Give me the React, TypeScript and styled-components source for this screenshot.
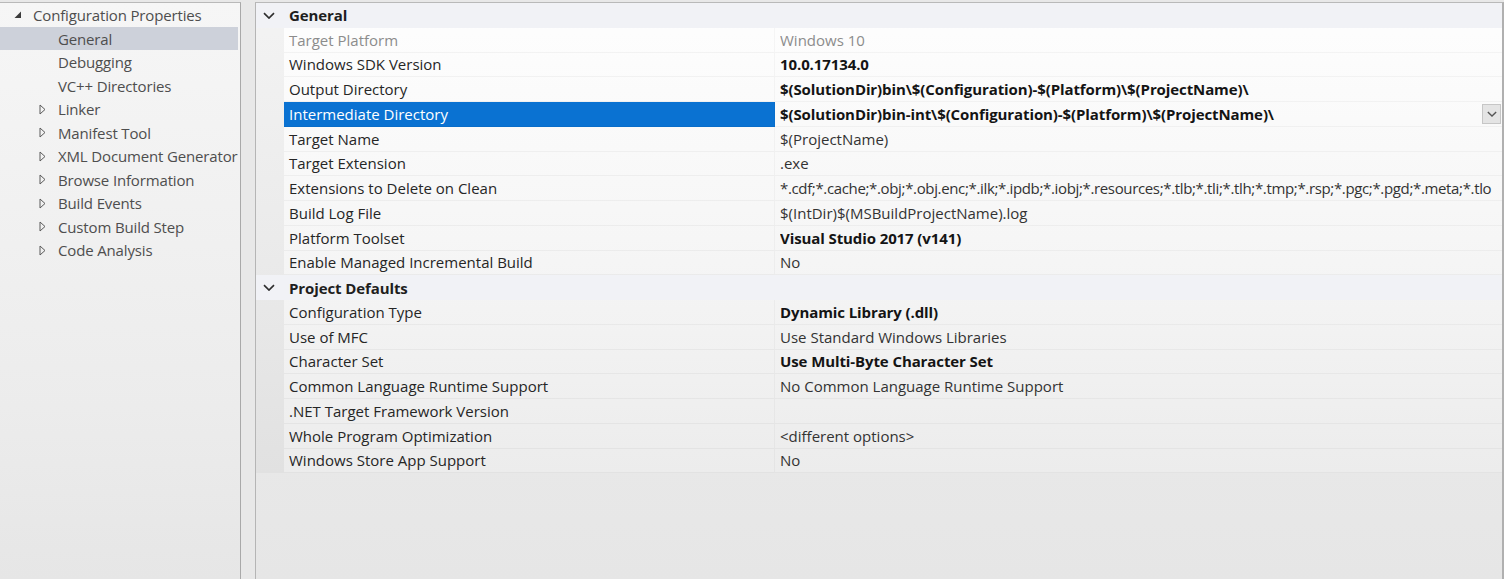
import React from "react";
import styled, { createGlobalStyle } from "styled-components";

const Global = createGlobalStyle`
  html, body { margin: 0; padding: 0; }
  body {
    width: 1504px;
    height: 579px;
    overflow: hidden;
    background: #e9e9e9;
    font-family: "Open Sans", "Noto Sans", sans-serif;
  }
`;

const Page = styled.div`
  display: flex;
  width: 1504px;
  height: 579px;
  padding-top: 2px;
  box-sizing: border-box;
  background: #e8e8e8;
`;

const TreePanel = styled.div`
  width: 241px;
  flex: none;
  box-sizing: border-box;
  border-top: 1px solid #b9b9b9;
  border-right: 1px solid #a9a9a9;
  background: linear-gradient(#f6f6f6, #ececec 70%, #e6e6e6);
  padding-top: 0.25px;
`;

const TreeRow = styled.div<{ $indent: number; $selected?: boolean }>`
  height: 23.5px;
  display: flex;
  align-items: center;
  margin-right: 2px;
  padding-left: ${(p) => p.$indent}px;
  background: ${(p) => (p.$selected ? "#cdd1da" : "transparent")};
  color: #4e4e4e;
  font-size: 15px;
  letter-spacing: -0.15px;
  white-space: nowrap;
`;

const TreeToggle = styled.span`
  width: 19px;
  flex: none;
  display: flex;
  align-items: center;
  justify-content: flex-start;
`;

const Label = styled.span``;

const Gap = styled.div`
  width: 14px;
  flex: none;
`;

const GridPanel = styled.div`
  flex: 1;
  box-sizing: border-box;
  border-top: 1px solid #b9b9b9;
  border-left: 1px solid #b5b5b5;
  border-right: 2px solid #b0b0b0;
  background: linear-gradient(#f0f0f0, #e6e6e6);
`;

const Grid = styled.div`
  display: grid;
  grid-template-columns: 28px 491px 1fr;
  grid-auto-rows: 24.75px;
  background: linear-gradient(#fefefe, #f6f6f6 50%, #ececec);
`;

const HeaderRow = styled.div`
  grid-column: 1 / -1;
  display: grid;
  grid-template-columns: 28px 1fr;
  align-items: center;
  background: #f1f2f6;
  font-weight: 700;
  font-size: 15px;
  color: #1e1e1e;
`;

const Chevron = styled.span`
  display: flex;
  justify-content: center;
  padding-right: 2px;
`;

const HeaderText = styled.span`
  padding-left: 5px;
  letter-spacing: -0.1px;
`;

const Gutter = styled.div`
  background: rgba(0, 0, 0, 0.045);
`;

const NameCell = styled.div<{ $selected?: boolean; $disabled?: boolean }>`
  display: flex;
  align-items: center;
  padding-left: 5px;
  box-sizing: border-box;
  border-bottom: 1px solid rgba(0, 0, 0, 0.035);
  border-right: 1px solid rgba(0, 0, 0, 0.03);
  font-size: 15px;
  white-space: nowrap;
  overflow: hidden;
  background: ${(p) => (p.$selected ? "#0a72d2" : "transparent")};
  color: ${(p) => (p.$selected ? "#ffffff" : p.$disabled ? "#8c8c8c" : "#262626")};
`;

const ValueCell = styled.div<{ $bold?: boolean; $disabled?: boolean; $tight?: boolean }>`
  display: flex;
  align-items: center;
  padding-left: 5px;
  box-sizing: border-box;
  border-bottom: 1px solid rgba(0, 0, 0, 0.035);
  font-size: 15px;
  white-space: nowrap;
  overflow: hidden;
  min-width: 0;
  letter-spacing: ${(p) => (p.$bold ? "-0.1px" : p.$tight ? "-0.35px" : "0")};
  font-weight: ${(p) => (p.$bold ? 700 : 400)};
  color: ${(p) => (p.$disabled ? "#8c8c8c" : p.$bold ? "#141414" : "#333333")};
`;

const ValueText = styled.span`
  flex: 1;
  overflow: hidden;
`;

const DropButton = styled.span`
  width: 19px;
  height: 20px;
  flex: none;
  margin-right: 1px;
  box-sizing: border-box;
  border: 1px solid #c6c6c6;
  background: #e4e4e4;
  display: flex;
  align-items: center;
  justify-content: center;
`;

const ExpandedIcon = () => (
  <svg width="8" height="8" viewBox="0 0 8 8">
    <polygon points="7,0.5 7,7 0.5,7" fill="#3c3c3c" />
  </svg>
);

const CollapsedIcon = () => (
  <svg width="7" height="11" viewBox="0 0 7 11">
    <polygon points="1,1 6,5.5 1,10" fill="none" stroke="#5a5a5a" strokeWidth="1" />
  </svg>
);

const ChevronIcon = ({ color = "#333", size = 12 }: { color?: string; size?: number }) => (
  <svg width={size} height={size * 0.6} viewBox="0 0 12 7">
    <polyline points="1,1 6,6 11,1" fill="none" stroke={color} strokeWidth="1.6" />
  </svg>
);

type Tree = { label: string; indent: number; kind: "expanded" | "collapsed" | "leaf"; selected?: boolean };

const tree: Tree[] = [
  { label: "Configuration Properties", indent: 14, kind: "expanded" },
  { label: "General", indent: 58, kind: "leaf", selected: true },
  { label: "Debugging", indent: 58, kind: "leaf" },
  { label: "VC++ Directories", indent: 58, kind: "leaf" },
  { label: "Linker", indent: 39, kind: "collapsed" },
  { label: "Manifest Tool", indent: 39, kind: "collapsed" },
  { label: "XML Document Generator", indent: 39, kind: "collapsed" },
  { label: "Browse Information", indent: 39, kind: "collapsed" },
  { label: "Build Events", indent: 39, kind: "collapsed" },
  { label: "Custom Build Step", indent: 39, kind: "collapsed" },
  { label: "Code Analysis", indent: 39, kind: "collapsed" },
];

type Prop = { name: string; value: string; bold?: boolean; disabled?: boolean; selected?: boolean; tight?: boolean };
type Section = { title: string; props: Prop[] };

const sections: Section[] = [
  {
    title: "General",
    props: [
      { name: "Target Platform", value: "Windows 10", disabled: true },
      { name: "Windows SDK Version", value: "10.0.17134.0", bold: true },
      { name: "Output Directory", value: "$(SolutionDir)bin\\$(Configuration)-$(Platform)\\$(ProjectName)\\", bold: true },
      {
        name: "Intermediate Directory",
        value: "$(SolutionDir)bin-int\\$(Configuration)-$(Platform)\\$(ProjectName)\\",
        bold: true,
        selected: true,
      },
      { name: "Target Name", value: "$(ProjectName)" },
      { name: "Target Extension", value: ".exe" },
      {
        name: "Extensions to Delete on Clean",
        value: "*.cdf;*.cache;*.obj;*.obj.enc;*.ilk;*.ipdb;*.iobj;*.resources;*.tlb;*.tli;*.tlh;*.tmp;*.rsp;*.pgc;*.pgd;*.meta;*.tlo",
        tight: true,
      },
      { name: "Build Log File", value: "$(IntDir)$(MSBuildProjectName).log" },
      { name: "Platform Toolset", value: "Visual Studio 2017 (v141)", bold: true },
      { name: "Enable Managed Incremental Build", value: "No" },
    ],
  },
  {
    title: "Project Defaults",
    props: [
      { name: "Configuration Type", value: "Dynamic Library (.dll)", bold: true },
      { name: "Use of MFC", value: "Use Standard Windows Libraries" },
      { name: "Character Set", value: "Use Multi-Byte Character Set", bold: true },
      { name: "Common Language Runtime Support", value: "No Common Language Runtime Support" },
      { name: ".NET Target Framework Version", value: "" },
      { name: "Whole Program Optimization", value: "<different options>" },
      { name: "Windows Store App Support", value: "No" },
    ],
  },
];

export default function App() {
  return (
    <>
      <Global />
      <Page>
        <TreePanel>
          {tree.map((t) => (
            <TreeRow key={t.label} $indent={t.indent} $selected={t.selected}>
              {t.kind !== "leaf" && (
                <TreeToggle>{t.kind === "expanded" ? <ExpandedIcon /> : <CollapsedIcon />}</TreeToggle>
              )}
              <Label>{t.label}</Label>
            </TreeRow>
          ))}
        </TreePanel>
        <Gap />
        <GridPanel>
          <Grid>
            {sections.map((s) => (
              <React.Fragment key={s.title}>
                <HeaderRow>
                  <Chevron>
                    <ChevronIcon color="#2e2e2e" size={12} />
                  </Chevron>
                  <HeaderText>{s.title}</HeaderText>
                </HeaderRow>
                {s.props.map((p) => (
                  <React.Fragment key={p.name}>
                    <Gutter />
                    <NameCell $selected={p.selected} $disabled={p.disabled}>
                      {p.name}
                    </NameCell>
                    <ValueCell $bold={p.bold} $disabled={p.disabled} $tight={p.tight}>
                      <ValueText>{p.value}</ValueText>
                      {p.selected && (
                        <DropButton>
                          <ChevronIcon color="#555" size={10} />
                        </DropButton>
                      )}
                    </ValueCell>
                  </React.Fragment>
                ))}
              </React.Fragment>
            ))}
          </Grid>
        </GridPanel>
      </Page>
    </>
  );
}
